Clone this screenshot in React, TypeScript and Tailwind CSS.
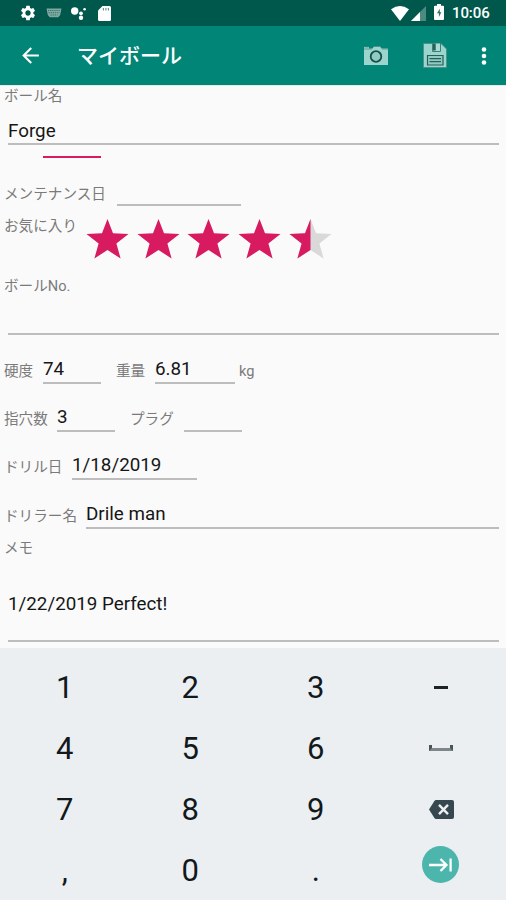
import { MdSettings, MdArrowBack } from "react-icons/md";

interface FieldProps {
  className: string;
  value?: string;
}

function Field({ className, value }: FieldProps) {
  return (
    <div
      className={`flex shrink-0 items-end border-b-2 border-[#bdbdbd] text-[18.8px] leading-[22px] text-[#161616] whitespace-nowrap ${className}`}
    >
      {value}
    </div>
  );
}

function Label({ className = "", text }: { className?: string; text: string }) {
  return (
    <div className={`shrink-0 text-[14.6px] leading-[20px] text-[#7a7a7a] whitespace-nowrap ${className}`}>
      {text}
    </div>
  );
}

const starPath = "M20.5 0 L26 14.2 L41.5 14.9 L29.4 24.4 L33.6 39.5 L20.5 31 L7.4 39.5 L11.6 24.4 L-0.5 14.9 L15 14.2 Z";

function Star({ half = false }: { half?: boolean }) {
  return (
    <svg width="41" height="40" viewBox="0 0 41 40" className="overflow-visible">
      <path d={starPath} fill={half ? "#d9d9d9" : "#d81b60"} />
      {half && (
        <path d="M20.5 0 L20.5 31 L7.4 39.5 L11.6 24.4 L-0.5 14.9 L15 14.2 Z" fill="#d81b60" />
      )}
    </svg>
  );
}

function StatusBar() {
  return (
    <div className="flex h-[26px] items-center bg-[#00574b] pl-[19px] pr-[16px] text-white">
      <MdSettings size={18} />
      <svg width="16" height="10" viewBox="0 0 16 10" className="ml-[9px]">
        <path d="M0.5 0.5h15l-1.3 6.500-2 2.200H3.800L1.800 7Z" fill="#7fa9a2" />
        <path d="M2 2.500h12M2.600 4.700h10.800M4.500 7h7" stroke="#2d7268" strokeWidth="0.900" strokeDasharray="1.300 0.800" />
      </svg>
      <svg width="17" height="14" viewBox="0 0 17 14" className="ml-[9px]" fill="#fff">
        <circle cx="3.700" cy="5" r="3.700" />
        <circle cx="10" cy="7.300" r="1.900" />
        <circle cx="10" cy="11.700" r="2.200" />
        <circle cx="13.600" cy="3.200" r="1.300" />
      </svg>
      <svg width="13" height="15" viewBox="0 0 13 15" className="ml-[10px]">
        <path d="M4.500 0H11.500Q13 0 13 1.500V13.500Q13 15 11.500 15H1.500Q0 15 0 13.500V4.500Z" fill="#fff" />
        <path d="M5.400 2v2.500M7.900 2v2.500M10.400 2v2.500" stroke="#5d918a" strokeWidth="1.100" />
      </svg>
      <svg width="18" height="15" viewBox="0 0 18 15" className="ml-auto">
        <path d="M0 3.200Q9 -3.200 18 3.200L9 15Z" fill="#fff" />
      </svg>
      <svg width="15" height="15" viewBox="0 0 15 15" className="ml-[2px]">
        <path d="M15 0V15H0Z" fill="#4d8a81" />
        <path d="M9 6V15H0Z" fill="#fff" />
      </svg>
      <svg width="10" height="16" viewBox="0 0 10 16" className="ml-[8px] -mt-[2px]">
        <path d="M3 0h4v1.700h2q1 0 1 1V15q0 1-1 1H1q-1 0-1-1V2.700q0-1 1-1h2Z" fill="#fff" />
        <path d="M5.800 4.800L3 9.300h1.900v3.700L7.400 8.300H5.800Z" fill="#2d7268" />
      </svg>
      <span className="ml-[8px] w-[38px] text-[15px] font-medium leading-none tracking-[-0.1px] whitespace-nowrap">
        10:06
      </span>
    </div>
  );
}

function AppBar() {
  return (
    <div className="flex h-[59px] items-center bg-[#008577] pl-[18px] pr-[19px] text-white">
      <MdArrowBack size={25} />
      <h1 className="ml-[34px] pt-[2px] text-[21px] font-medium leading-none">マイボール</h1>
      <svg width="24" height="19" viewBox="0 0 24 19" className="ml-auto -mt-px">
        <path d="M0 1h5v1.500h3.500L10 0.500h6L17.500 2.500H24V19H0Z" fill="#9bd5cd" />
        <path d="M0.500 1h4M9.500 0.500h7M0 3h8M18 3h6" stroke="#4b8d85" strokeWidth="0.800" />
        <circle cx="12" cy="10.500" r="5.300" fill="#8fcbc3" stroke="#174f49" strokeWidth="1.800" />
      </svg>
      <svg width="24" height="25" viewBox="0 0 24 25" className="ml-[35px]">
        <path d="M0.500 0.500H18L23.500 6V24.500H0.500Z" fill="#9bd5cd" stroke="#4b8d85" strokeWidth="0.800" />
        <path d="M9.500 0V8.500H17.500V0Z" fill="#a9dbd4" stroke="#3f7f78" strokeWidth="1" />
        <path d="M10 0.500h2.700v7H10Z" fill="#285f59" />
        <path d="M4.500 12.500h15.500v9.500H4.500Z" fill="#8fcbc3" stroke="#285f59" strokeWidth="1.200" />
        <path d="M6.500 15.700h11.500M6.500 18.700h11.500" stroke="#285f59" strokeWidth="1.200" />
      </svg>
      <svg width="6" height="18" viewBox="0 0 6 18" className="ml-[34px]" fill="#fff">
        <circle cx="3" cy="2.500" r="2.300" />
        <circle cx="3" cy="9" r="2.300" />
        <circle cx="3" cy="15.500" r="2.300" />
      </svg>
    </div>
  );
}

function Key({ label }: { label: string }) {
  return <div className="flex items-center justify-center text-[31px] leading-none text-[#12191c]">{label}</div>;
}

function Keypad() {
  return (
    <div className="grid h-[252px] grid-cols-4 grid-rows-[61px_61px_61px_61px] bg-[#eceff1] pl-[2px] pr-[2px] pt-[9px]">
      <Key label="1" />
      <Key label="2" />
      <Key label="3" />
      <div className="flex items-center justify-center">
        <div className="h-[3px] w-[14px] bg-[#1c2326]" />
      </div>
      <Key label="4" />
      <Key label="5" />
      <Key label="6" />
      <div className="flex items-center justify-center">
        <div className="-mt-[2px] h-[6px] w-[24px] border-x-[3px] border-b-[3px] border-x-[#4a5357] border-b-[#7d868a]" />
      </div>
      <Key label="7" />
      <Key label="8" />
      <Key label="9" />
      <div className="flex items-center justify-center">
        <svg width="25" height="19" viewBox="0 0 25 19">
          <path d="M7 0H23q2 0 2 2V17q0 2-2 2H7q-1 0-1.600-0.900L0 9.500 5.400 0.900Q6 0 7 0Z" fill="#37474f" />
          <path d="M10 4.800L19 14.200M19 4.800L10 14.200" stroke="#eceff1" strokeWidth="2.400" />
        </svg>
      </div>
      <Key label="," />
      <Key label="0" />
      <Key label="." />
      <div className="flex items-start justify-center pt-[6px]">
        <div className="mr-[1px] flex h-[37px] w-[37px] items-center justify-center rounded-full bg-[#4db6ac]">
          <svg width="23" height="14" viewBox="0 0 23 14" fill="none" stroke="#fff" strokeWidth="2.300">
            <path d="M0 7H17M11.500 1L17.500 7L11.500 13M21.600 0.500V13.500" />
          </svg>
        </div>
      </div>
    </div>
  );
}

export default function App() {
  return (
    <div className="flex h-[900px] w-[506px] flex-col overflow-hidden bg-[#fafafa] font-[Roboto,'Noto_Sans_CJK_JP',sans-serif]">
      <StatusBar />
      <AppBar />
      <div className="flex h-[563px] flex-col border-t border-[#e8e8e8] pl-[4px] pr-[7px]">
        <Label className="h-[21px]" text="ボール名" />
        <Field className="ml-[4px] h-[38px] pb-[1px]" value="Forge" />
        <div className="ml-[39px] mt-[11px] h-[2px] w-[58px] bg-[#d81b60]" />
        <div className="flex h-[48px] items-end">
          <Label className="w-[113px] pb-[2px]" text="メンテナンス日" />
          <Field className="h-[27px] w-[124px]" />
        </div>
        <div className="flex h-[70px] items-start pt-[10px]">
          <Label className="w-[83px]" text="お気に入り" />
          <div className="mt-[3px] flex gap-[9.700px]">
            <Star />
            <Star />
            <Star />
            <Star />
            <Star half />
          </div>
        </div>
        <Label className="h-[20px]" text="ボールNo." />
        <Field className="ml-[4px] h-[39px]" />
        <div className="flex h-[49px] items-end">
          <Label className="w-[39px] pb-[3px]" text="硬度" />
          <Field className="h-[27px] w-[58px] pb-[2px]" value="74" />
          <Label className="ml-[15px] w-[39px] pb-[3px]" text="重量" />
          <Field className="h-[27px] w-[80px] pb-[2px]" value="6.81" />
          <Label className="ml-[4px] pb-[3px]" text="kg" />
        </div>
        <div className="flex h-[48px] items-end">
          <Label className="w-[53px] pb-[3px]" text="指穴数" />
          <Field className="h-[27px] w-[58px] pb-[2px]" value="3" />
          <Label className="ml-[15px] w-[54px] pb-[3px]" text="プラグ" />
          <Field className="h-[27px] w-[58px]" />
        </div>
        <div className="flex h-[48px] items-end">
          <Label className="w-[68px] pb-[3px]" text="ドリル日" />
          <Field className="h-[27px] w-[125px] pb-[2px]" value="1/18/2019" />
        </div>
        <div className="flex h-[49px] items-end">
          <Label className="w-[82px] pb-[3px]" text="ドリラー名" />
          <Field className="h-[27px] w-[413px] pb-[2px]" value="Drile man" />
        </div>
        <Label className="mt-[9px] h-[20px]" text="メモ" />
        <Field className="ml-[4px] h-[84px] pb-[25px]" value="1/22/2019 Perfect!" />
      </div>
      <Keypad />
    </div>
  );
}
